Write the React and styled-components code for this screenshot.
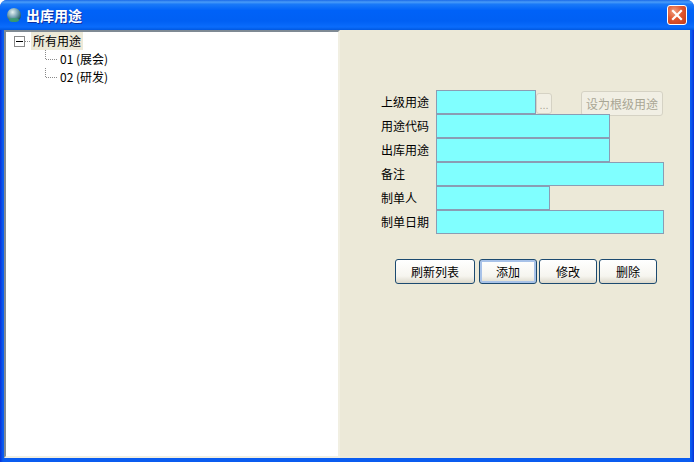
import React from "react";
import styled, { createGlobalStyle } from "styled-components";

const Global = createGlobalStyle`
  html, body { margin: 0; padding: 0; background: #fff; }
  #root { width: 694px; height: 462px; overflow: hidden; }
  * { box-sizing: border-box; }
`;
const cjk = `"Noto Sans CJK SC", "Liberation Sans", sans-serif`;

const Win = styled.div`
  width: 694px; height: 462px; display: flex; flex-direction: column;
  background: linear-gradient(90deg, #0831d9 0, #0a5cf0 3px, #0a5cf0 691px, #0831d9 694px);
  border-radius: 7px 7px 0 0; overflow: hidden;
  font: 12px/14px ${cjk}; color: #000;
`;
const TitleBar = styled.div`
  height: 30px; flex: none; display: flex; align-items: center; padding: 0 7px 0 6px; gap: 4px;
  background: linear-gradient(180deg, #1a6ae8 0%, #4a9cf8 7%, #1a7af8 14%, #0062f8 35%, #0060f4 70%, #0a6cfc 90%, #0058e0 100%);
`;
const Title = styled.div`
  flex: 1; color: #fff; font: bold 14px/16px ${cjk}; text-shadow: 1px 1px 0 #0f2f9f; margin-bottom: 1px;
`;
const CloseBtn = styled.div`
  width: 20px; height: 20px; border: 1px solid #fff; border-radius: 3px; display: flex; align-items: center; justify-content: center;
  background: radial-gradient(circle at 35% 30%, #f0a080 0%, #e0562f 45%, #c23a17 100%);
`;
const Body = styled.div`
  flex: 1; display: flex; margin: 0 4px 4px 4px;
  background: #ece9d8; min-height: 0;
`;
const TreePane = styled.div`
  width: 336px; flex: none; background: #fff;
  border-top: 2px solid #7f8a94; border-left: 2px solid #7f8a94;
  border-bottom: 2px solid #f1efe2; border-right: 2px solid #f1efe2;
  padding: 0 0 0 8px;
`;
const TreeRow = styled.div`
  height: 18px; display: flex; align-items: center; padding-left: ${p => p.$indent || 0}px;
`;
const Expander = styled.div`
  width: 11px; height: 11px; border: 1px solid #8a8a8a; background: #fff; display: flex; align-items: center; justify-content: center; flex: none;
  &::after { content: ""; width: 7px; height: 1px; background: #000; }
`;
const HDots = styled.div`
  width: ${p => p.$w}px; height: 1px; flex: none;
  background-image: linear-gradient(90deg, #8a8a8a 50%, transparent 50%); background-size: 2px 1px;
`;
const Branch = styled.div`
  width: 1px; height: ${p => p.$h}px; flex: none; align-self: flex-start;
  background-image: linear-gradient(180deg, #8a8a8a 50%, transparent 50%); background-size: 1px 2px;
`;
const Node = styled.span`
  padding: 2px 2px; white-space: pre; line-height: 14px; background: ${p => p.$sel ? "#ece9d8" : "transparent"};
`;
const FormPane = styled.div`
  flex: 1; padding: 60px 0 0 41px; display: flex; flex-direction: column;
`;
const Row = styled.div`display: flex; align-items: center; height: 24px;`;
const Label = styled.div`width: 55px; flex: none; white-space: nowrap; line-height: 14px;`;
const Input = styled.div`
  width: ${p => p.$w}px; height: 24px; flex: none; background: #80ffff; border: 1px solid #8a9db4;
`;
const Dots = styled.div`
  width: 16px; height: 21px; flex: none; margin-top: 2px; border: 1px solid #d5d2c4; border-radius: 3px; background: #f1efe4; color: #a9a694;
  font: 11px/22px "Liberation Sans", sans-serif; text-align: center;
`;
const RootBtn = styled.div`
  width: 82px; height: 25px; flex: none; margin: 2px 0 0 29px; border: 1px solid #d5d2c4; border-radius: 3px; background: #f1efe4; color: #a9a694;
  line-height: 23px; text-align: center; white-space: nowrap;
`;
const Actions = styled.div`display: flex; gap: 2px; margin: 25px 0 0 14px;`;
const Btn = styled.div`
  width: ${p => p.$w}px; height: 25px; flex: none; margin-right: ${p => p.$mr || 0}px; text-align: center; line-height: 23px;
  border: 1px solid #1c4a70; border-radius: 3px; white-space: nowrap;
  background: linear-gradient(180deg, #ffffff 0%, #f6f5ef 70%, #dcd8ca 100%);
  box-shadow: ${p => p.$focus ? "inset 0 0 0 2px #a8c2e8" : "none"};
`;

const Globe = () => (
  <svg width="16" height="18" viewBox="0 0 16 18">
    <defs>
      <radialGradient id="g" cx="0.4" cy="0.3" r="0.75">
        <stop offset="0" stopColor="#e6f2f2" />
        <stop offset="0.45" stopColor="#7fa8b8" />
        <stop offset="1" stopColor="#0f4a4a" />
      </radialGradient>
    </defs>
    <circle cx="8" cy="9" r="7" fill="url(#g)" />
    <ellipse cx="8" cy="14" rx="5" ry="2" fill="#3aa070" opacity="0.85" />
  </svg>
);

const Field = ({ label, w }) => (
  <Row>
    <Label>{label}</Label>
    <Input $w={w} />
  </Row>
);

export default function App() {
  return (
    <Win>
      <Global />
      <TitleBar>
        <Globe />
        <Title>出库用途</Title>
        <CloseBtn>
          <svg width="12" height="12" viewBox="0 0 12 12">
            <path d="M2 2 L10 10 M10 2 L2 10" stroke="#fff" strokeWidth="2.2" strokeLinecap="square" />
          </svg>
        </CloseBtn>
      </TitleBar>
      <Body>
        <TreePane>
          <TreeRow>
            <Expander />
            <HDots $w={6} />
            <Node $sel>所有用途</Node>
          </TreeRow>
          <TreeRow $indent={31}>
            <Branch $h={9} />
            <HDots $w={12} />
            <Node>01 (展会)</Node>
          </TreeRow>
          <TreeRow $indent={31}>
            <Branch $h={9} />
            <HDots $w={12} />
            <Node>02 (研发)</Node>
          </TreeRow>
        </TreePane>
        <FormPane>
          <Row>
            <Label>上级用途</Label>
            <Input $w={100} />
            <Dots>...</Dots>
            <RootBtn>设为根级用途</RootBtn>
          </Row>
          <Field label="用途代码" w={174} />
          <Field label="出库用途" w={174} />
          <Field label="备注" w={228} />
          <Field label="制单人" w={114} />
          <Field label="制单日期" w={228} />
          <Actions>
            <Btn $w={80} $mr={2}>刷新列表</Btn>
            <Btn $w={58} $focus>添加</Btn>
            <Btn $w={58}>修改</Btn>
            <Btn $w={58}>删除</Btn>
          </Actions>
        </FormPane>
      </Body>
    </Win>
  );
}
